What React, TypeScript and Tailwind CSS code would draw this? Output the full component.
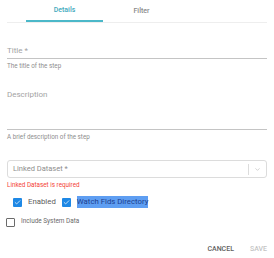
import { Check, ChevronDown } from "lucide-react";

const font = { fontFamily: "Roboto, 'Liberation Sans', sans-serif" };

const Box = ({ checked }: { checked: boolean }) =>
  checked ? (
    <span className="flex h-[9px] w-[9px] items-center justify-center rounded-[1px] bg-[#1e88e5]">
      <Check className="h-[7px] w-[7px] text-white" strokeWidth={2.5} />
    </span>
  ) : (
    <span className="h-[9px] w-[9px] rounded-[1px] border border-[#6b6b6b] bg-white" />
  );

export default function App() {
  return (
    <div style={font} className="h-[258px] w-[274px] bg-white px-[7px] text-[#757575]">
      <div className="flex border-b border-[#eeeeee]">
        <div className="ml-[19px] flex h-[22px] w-[77px] items-center justify-center border-b-2 border-[#4bb8c9] pt-[1px] text-[7px] font-medium text-[#3ea9bd]">
          Details
        </div>
        <div className="flex h-[22px] w-[77px] items-center justify-center text-[7px] font-medium text-[#8a8a8a]">
          Filter
        </div>
      </div>

      <div className="mt-[22px] border-b border-[#c4c4c4] pb-[1px] text-[8px] leading-[12px] text-[#a3a3a3]">Title *</div>
      <div className="mt-[3px] text-[6.3px] leading-[8px] text-[#8e8e8e]">The title of the step</div>

      <div className="mt-[20px] h-[40px] border-b border-[#c4c4c4] text-[8px] leading-[10px] text-[#a3a3a3]">Description</div>
      <div className="mt-[3px] text-[6.3px] leading-[8px] text-[#8e8e8e]">A brief description of the step</div>

      <div className="mt-[19px] flex h-[18px] items-center rounded-[3px] border border-[#dcdcdc] pl-[5px] pr-[5px]">
        <span className="flex-1 text-[7.5px] text-[#8e8e8e]">Linked Dataset *</span>
        <span className="h-[11px] w-px bg-[#dcdcdc]" />
        <ChevronDown className="ml-[5px] h-[7px] w-[7px] text-[#b5b5b5]" />
      </div>
      <div className="mt-[3px] text-[6.3px] leading-[8px] text-[#f44336]">Linked Dataset is required</div>

      <div className="mt-[7px] flex h-[12px] items-center pl-[6px] text-[7.8px] text-[#5c5c5c]">
        <Box checked />
        <span className="ml-[6px]">Enabled</span>
        <span className="ml-[6px]"><Box checked /></span>
        <span className="ml-[6px] bg-[#5e9ef2] leading-[12px] text-[#1d3f8f]">Watch Flds Directory</span>
      </div>

      <div className="mt-[9px] -ml-[1px] flex h-[10px] items-center text-[6.4px] text-[#6b6b6b]">
        <Box checked={false} />
        <span className="ml-[6px]">Include System Data</span>
      </div>

      <div className="mt-[17px] flex justify-end gap-[16px] text-[7px] font-medium leading-[10px]">
        <span className="text-[#616161]">CANCEL</span>
        <span className="text-[#c4c4c4]">SAVE</span>
      </div>
    </div>
  );
}
